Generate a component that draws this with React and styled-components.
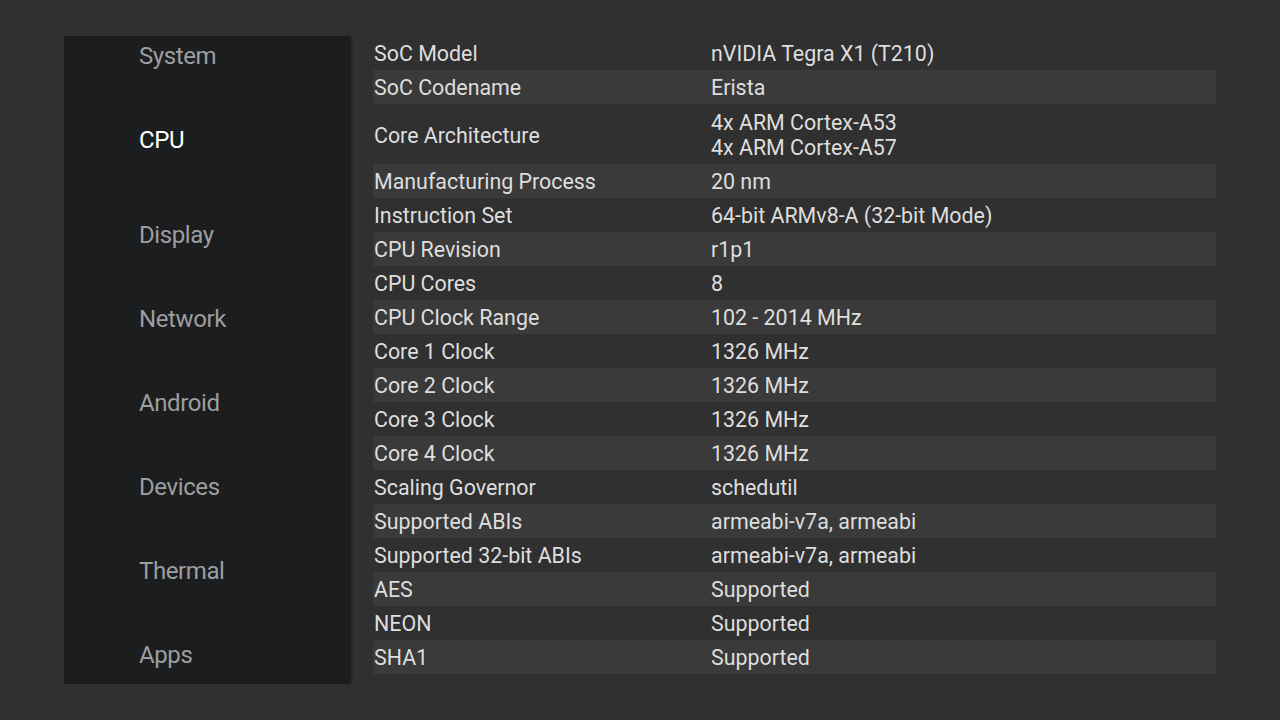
import React from "react";
import styled, { createGlobalStyle } from "styled-components";

const GlobalStyle = createGlobalStyle`
  html, body {
    margin: 0;
    padding: 0;
    background: #303030;
    font-family: Roboto, "Noto Sans", sans-serif;
  }
`;

const Screen = styled.div`
  width: 1280px;
  height: 720px;
  background: #303030;
  display: flex;
  align-items: flex-start;
  padding: 36px 0 0 64px;
  box-sizing: border-box;
  gap: 20px;
`;

const Sidebar = styled.nav`
  width: 289px;
  height: 648px;
  background: #1c1d1f;
  border-right: 2px solid #28292b;
  box-sizing: border-box;
  display: flex;
  flex-direction: column;
  padding: 5px 0 0 75px;
`;

const NavItem = styled.div`
  height: 30px;
  line-height: 30px;
  font-size: 24px;
  letter-spacing: -0.4px;
  color: ${(p) => (p.$active ? "#ffffff" : "#9d9e9f")};
  margin-bottom: ${(p) => (p.$active ? "65px" : "54px")};
`;

const Table = styled.div`
  width: 843px;
  display: flex;
  flex-direction: column;
`;

const Row = styled.div`
  display: grid;
  grid-template-columns: 337px 1fr;
  align-items: center;
  min-height: 34px;
  padding: ${(p) => (p.$tall ? "6px 0 4px" : "1px 0 0")};
  box-sizing: border-box;
  background: ${(p) => (p.$striped ? "#3a3a3a" : "transparent")};
  font-size: 21.4px;
  color: #dedede;
  padding-left: 1px;
`;

const Label = styled.div`
  line-height: 25px;
`;

const Value = styled.div`
  line-height: 25px;
  display: flex;
  flex-direction: column;
`;

const nav = ["System", "CPU", "Display", "Network", "Android", "Devices", "Thermal", "Apps"];

const rows = [
  ["SoC Model", ["nVIDIA Tegra X1 (T210)"]],
  ["SoC Codename", ["Erista"]],
  ["Core Architecture", ["4x ARM Cortex-A53", "4x ARM Cortex-A57"]],
  ["Manufacturing Process", ["20 nm"]],
  ["Instruction Set", ["64-bit ARMv8-A (32-bit Mode)"]],
  ["CPU Revision", ["r1p1"]],
  ["CPU Cores", ["8"]],
  ["CPU Clock Range", ["102 - 2014 MHz"]],
  ["Core 1 Clock", ["1326 MHz"]],
  ["Core 2 Clock", ["1326 MHz"]],
  ["Core 3 Clock", ["1326 MHz"]],
  ["Core 4 Clock", ["1326 MHz"]],
  ["Scaling Governor", ["schedutil"]],
  ["Supported ABIs", ["armeabi-v7a, armeabi"]],
  ["Supported 32-bit ABIs", ["armeabi-v7a, armeabi"]],
  ["AES", ["Supported"]],
  ["NEON", ["Supported"]],
  ["SHA1", ["Supported"]],
];

export default function App() {
  return (
    <>
      <GlobalStyle />
      <Screen>
        <Sidebar>
          {nav.map((n) => (
            <NavItem key={n} $active={n === "CPU"}>
              {n}
            </NavItem>
          ))}
        </Sidebar>
        <Table>
          {rows.map(([label, values], i) => (
            <Row key={label} $striped={i % 2 === 1} $tall={values.length > 1}>
              <Label>{label}</Label>
              <Value>
                {values.map((v) => (
                  <span key={v}>{v}</span>
                ))}
              </Value>
            </Row>
          ))}
        </Table>
      </Screen>
    </>
  );
}
